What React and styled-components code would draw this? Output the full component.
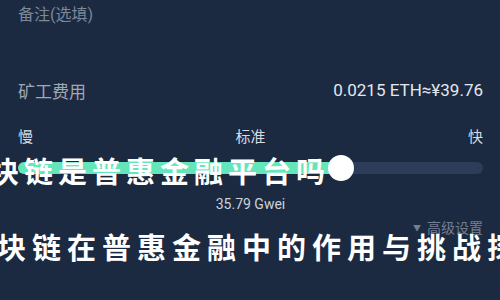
import React from 'react';
import styled, { createGlobalStyle } from 'styled-components';

const GlobalStyle = createGlobalStyle`
  html, body {
    margin: 0;
    padding: 0;
    background-color: #1b2a41;
    overflow: hidden;
  }
  body {
    font-family: Roboto, "Noto Sans CJK SC", sans-serif;
  }
`;

const App = () => {
  const percent = 69.5;

  return (
    <Page>
      <GlobalStyle />
      <Remark>备注(选填)</Remark>
      <FeeRow>
        <FeeLabel>矿工费用</FeeLabel>
        <FeeValue>0.0215 ETH≈¥39.76</FeeValue>
      </FeeRow>
      <SpeedRow>
        <Speed>慢</Speed>
        <Speed>标准</Speed>
        <Speed>快</Speed>
      </SpeedRow>
      <Track>
        <Fill style={{ width: `${percent}%` }} />
        <Thumb style={{ left: `${percent}%` }} />
      </Track>
      <Gas>35.79 Gwei</Gas>
      <Advanced>
        <Caret>▼</Caret>
        高级设置
      </Advanced>
      <Headline top={150} left={-44} size={29} spacing={5}>
        区块链是普惠金融平台吗
      </Headline>
      <Headline top={226} left={-38} size={29} spacing={6}>
        区块链在普惠金融中的作用与挑战探析
      </Headline>
    </Page>
  );
};

const Page = styled.div`
  position: relative;
  width: 500px;
  height: 300px;
  box-sizing: border-box;
  padding: 4px 17px 0 18px;
  background-color: #1b2a41;
  overflow: hidden;
  display: flex;
  flex-direction: column;
`;

const Remark = styled.div`
  font-size: 16px;
  line-height: 22px;
  color: #7c8798;
`;

const FeeRow = styled.div`
  margin-top: 52px;
  display: flex;
  justify-content: space-between;
  align-items: center;
  height: 24px;
`;

const FeeLabel = styled.div`
  font-size: 17px;
  color: #a0a8b5;
`;

const FeeValue = styled.div`
  font-size: 17px;
  color: #e3e7ed;
`;

const SpeedRow = styled.div`
  margin-top: 23px;
  display: flex;
  justify-content: space-between;
  align-items: center;
  height: 20px;
`;

const Speed = styled.div`
  font-size: 15px;
  color: #d7dbe1;
`;

const Track = styled.div`
  position: relative;
  margin-top: 17px;
  height: 12px;
  border-radius: 6px;
  background-color: #2d3c58;
`;

const Fill = styled.div`
  height: 100%;
  border-radius: 6px;
  background-color: #63e6b9;
`;

const Thumb = styled.div`
  position: absolute;
  top: 50%;
  width: 26px;
  height: 26px;
  border-radius: 50%;
  background-color: #ffffff;
  transform: translate(-50%, -50%);
`;

const Gas = styled.div`
  margin-top: 22px;
  text-align: center;
  font-size: 14px;
  color: #cdd2d9;
`;

const Advanced = styled.div`
  margin-top: 5px;
  align-self: flex-end;
  display: flex;
  align-items: center;
  gap: 6px;
  font-size: 14px;
  color: #737f91;
`;

const Caret = styled.span`
  font-size: 8px;
`;

const Headline = styled.div`
  position: absolute;
  top: ${(p) => p.top}px;
  left: ${(p) => p.left}px;
  font-family: "Noto Sans CJK SC", sans-serif;
  font-weight: 700;
  font-size: ${(p) => p.size}px;
  letter-spacing: ${(p) => p.spacing}px;
  line-height: 40px;
  white-space: nowrap;
  color: #ffffff;
`;

export default App;
